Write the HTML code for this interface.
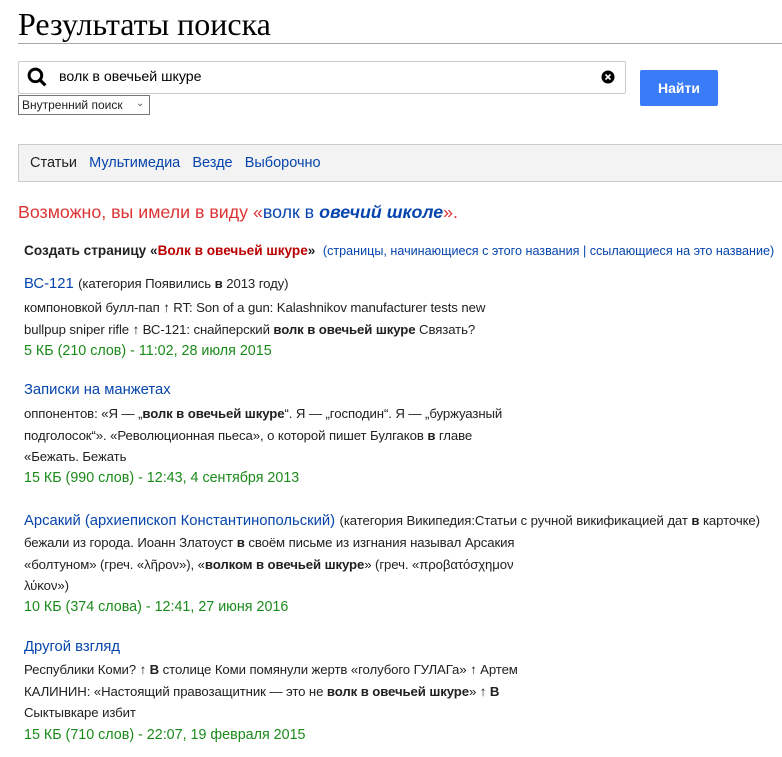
<!DOCTYPE html>
<html><head><meta charset="utf-8"><style>
body{margin:0;background:#fff;font-family:"Liberation Sans",sans-serif;color:#202122;width:782px;height:757px;overflow:hidden;position:relative}
.a{position:absolute;white-space:nowrap}
h1{position:absolute;left:18px;top:6px;margin:0;font:400 32px "Liberation Serif",serif;color:#000;letter-spacing:0px}
.hr{position:absolute;left:18px;top:43px;width:764px;height:1px;background:#a2a9b1}
.inp{position:absolute;left:18px;top:61px;width:606px;height:31px;border:1px solid #c8ccd1;border-radius:2px}
.btn{position:absolute;left:640px;top:70px;width:78px;height:36px;background:#3a7cf7;border-radius:2px;color:#fff;font-weight:bold;font-size:14px;text-align:center;line-height:36px}
.sel{position:absolute;left:18px;top:95px;border:1px solid #777;font-size:12px;line-height:18px;box-sizing:border-box;padding-left:3px;width:132px;height:20px}
.tabs{position:absolute;left:18px;top:144px;width:764px;height:38px;background:#f3f3f3;border:1px solid #c8ccd1;border-right:none;box-sizing:border-box}
.t{font-size:14.5px}
.l{color:#0645ad}
.r{font-size:13.2px;letter-spacing:-0.1px}
.g{color:#1a8a1a}
.rt{font-size:14.8px;color:#0645ad}
</style></head><body>
<h1>Результаты поиска</h1>
<div class="hr"></div>
<div class="inp"></div>
<svg class="a" style="left:27px;top:67px" width="21" height="21" viewBox="0 0 20 20"><circle cx="8" cy="8" r="6" fill="none" stroke="#000" stroke-width="2.8"/><line x1="12.5" y1="12.5" x2="17.5" y2="17.5" stroke="#000" stroke-width="3"/></svg>
<div class="a" style="left:59px;top:69px;color:#000;font-size:14.2px">волк в овечьей шкуре</div>
<svg class="a" style="left:601px;top:70px" width="14" height="14" viewBox="0 0 14 14"><circle cx="7" cy="7" r="6.5" fill="#000"/><path d="M4.5 4.5L9.5 9.5M9.5 4.5L4.5 9.5" stroke="#fff" stroke-width="1.6"/></svg>
<div class="btn">Найти</div>
<div class="sel">Внутренний поиск <span style="position:absolute;left:117px;top:-1px;font-size:10px;color:#555">⌄</span></div>
<div class="tabs"></div>
<div class="a t" style="left:30px;top:155px"><span>Статьи</span>&nbsp;&nbsp; <span class="l">Мультимедиа</span>&nbsp;&nbsp; <span class="l">Везде</span>&nbsp;&nbsp; <span class="l">Выборочно</span></div>
<div class="a" style="left:18px;top:202px;font-size:17.8px;color:#d33">Возможно, вы имели в виду «<span class="l">волк в <b><i>овечий школе</i></b></span>».</div>
<div class="a" style="left:24px;top:243px;font-size:13.6px"><b>Создать страницу «<span style="color:#ba0000">Волк в овечьей шкуре</span>»</b> &nbsp;<span class="l" style="font-size:12.6px">(страницы, начинающиеся с этого названия | ссылающиеся на это название)</span></div>

<div class="a" style="left:24px;top:275px"><span class="rt">ВС-121</span> <span class="r">(категория Появились <b>в</b> 2013 году)</span></div>
<div class="a r" style="left:24px;top:300px">компоновкой булл-пап ↑ RT: Son of a gun: Kalashnikov manufacturer tests new</div>
<div class="a r" style="left:24px;top:322px">bullpup sniper rifle ↑ ВС-121: снайперский <b>волк в овечьей шкуре</b> Связать?</div>
<div class="a g" style="left:24px;top:343px;font-size:14.3px">5 КБ (210 слов) - 11:02, 28 июля 2015</div>

<div class="a rt" style="left:24px;top:382px">Записки на манжетах</div>
<div class="a r" style="left:24px;top:406px">оппонентов: «Я — „<b>волк в овечьей шкуре</b>“. Я — „господин“. Я — „буржуазный</div>
<div class="a r" style="left:24px;top:428px">подголосок“». «Революционная пьеса», о которой пишет Булгаков <b>в</b> главе</div>
<div class="a r" style="left:24px;top:449px">«Бежать. Бежать</div>
<div class="a g" style="left:24px;top:470px;font-size:14.3px">15 КБ (990 слов) - 12:43, 4 сентября 2013</div>

<div class="a" style="left:24px;top:512px"><span class="rt">Арсакий (архиепископ Константинопольский)</span> <span class="r">(категория Википедия:Статьи с ручной викификацией дат <b>в</b> карточке)</span></div>
<div class="a r" style="left:24px;top:535px">бежали из города. Иоанн Златоуст <b>в</b> своём письме из изгнания называл Арсакия</div>
<div class="a r" style="left:24px;top:557px">«болтуном» (греч. «λῆρον»), «<b>волком в овечьей шкуре</b>» (греч. «προβατόσχημον</div>
<div class="a r" style="left:24px;top:578px">λύκον»)</div>
<div class="a g" style="left:24px;top:599px;font-size:14.3px">10 КБ (374 слова) - 12:41, 27 июня 2016</div>

<div class="a rt" style="left:24px;top:639px">Другой взгляд</div>
<div class="a r" style="left:24px;top:662px">Республики Коми? ↑ <b>В</b> столице Коми помянули жертв «голубого ГУЛАГа» ↑ Артем</div>
<div class="a r" style="left:24px;top:684px">КАЛИНИН: «Настоящий правозащитник — это не <b>волк в овечьей шкуре</b>» ↑ <b>В</b></div>
<div class="a r" style="left:24px;top:705px">Сыктывкаре избит</div>
<div class="a g" style="left:24px;top:727px;font-size:14.3px">15 КБ (710 слов) - 22:07, 19 февраля 2015</div>
</body></html>
